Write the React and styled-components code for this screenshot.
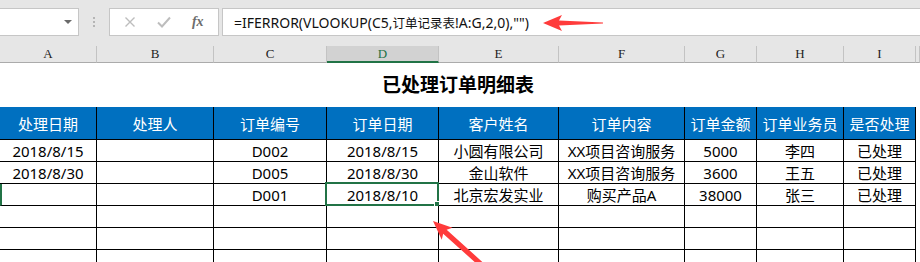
import React from 'react';
import styled, { createGlobalStyle } from 'styled-components';

const GlobalStyle = createGlobalStyle`
  html, body {
    margin: 0;
    padding: 0;
    background: #fff;
  }
  body {
    width: 920px;
    height: 262px;
    overflow: hidden;
    font-family: "Noto Sans", "Noto Sans CJK SC", sans-serif;
  }
`;

const COLS = '97px 117px 113px 112px 120px 126px 72px 87px 72px 1fr';

const Sheet = styled.div`
  position: relative;
  width: 920px;
  height: 262px;
  overflow: hidden;
`;

const Toolbar = styled.div`
  height: 46px;
  background: #e6e6e6;
  display: flex;
  align-items: flex-start;
  padding-top: 8px;
  box-sizing: border-box;
`;

const NameBox = styled.div`
  width: 79px;
  height: 28px;
  box-sizing: border-box;
  background: #fff;
  border: 1px solid #c6c6c6;
  border-left: none;
  display: flex;
  align-items: center;
  justify-content: flex-end;
  padding-right: 6px;
`;

const DropArrow = styled.span`
  width: 0;
  height: 0;
  border-left: 4px solid transparent;
  border-right: 4px solid transparent;
  border-top: 4px solid #6a6a6a;
`;

const Grip = styled.div`
  width: 30px;
  height: 28px;
  display: flex;
  flex-direction: column;
  align-items: center;
  justify-content: center;
  gap: 2px;
  span {
    width: 2px;
    height: 2px;
    background: #b5b5b5;
  }
`;

const FxBox = styled.div`
  width: 110px;
  height: 28px;
  box-sizing: border-box;
  background: #fff;
  border: 1px solid #c6c6c6;
  display: flex;
  align-items: center;
  justify-content: space-around;
  padding: 0 4px;
  margin-right: 3px;
`;

const FxLabel = styled.span`
  font-family: "Liberation Serif", serif;
  font-style: italic;
  font-size: 14px;
  color: #6d6d6d;
  font-weight: bold;
`;

const FormulaBar = styled.div`
  flex: 1;
  height: 28px;
  box-sizing: border-box;
  background: #fff;
  border: 1px solid #c6c6c6;
  border-right: none;
  display: flex;
  align-items: center;
  padding-left: 11px;
  font-size: 14px;
  color: #111;
  white-space: nowrap;
`;

const Cjk = styled.span`
  font-family: "Noto Sans CJK SC", sans-serif;
  font-size: 12.5px;
`;

const Grid = styled.div`
  display: grid;
  grid-template-columns: ${COLS};
`;

const ColHead = styled.div`
  height: 17px;
  box-sizing: border-box;
  background: ${p => (p.$active ? '#d2d2d2' : '#e6e6e6')};
  border-bottom: ${p => (p.$active ? '2px solid #217346' : '1px solid #ababab')};
  border-right: 1px solid #c3c3c3;
  color: ${p => (p.$active ? '#217346' : '#222')};
  font-family: "Liberation Serif", serif;
  font-size: 13px;
  line-height: 16px;
  text-align: center;
`;

const TitleRow = styled.div`
  height: 44px;
  display: grid;
  grid-template-columns: 916px 1fr;
`;

const Title = styled.div`
  display: flex;
  align-items: center;
  justify-content: center;
  font-family: "Noto Sans CJK SC", sans-serif;
  font-weight: bold;
  font-size: 19px;
  color: #000;
  padding-bottom: 4px;
`;

const Cell = styled.div`
  position: relative;
  height: ${p => (p.$head ? '33px' : '22px')};
  box-sizing: border-box;
  display: flex;
  align-items: center;
  justify-content: center;
  white-space: nowrap;
  font-size: 15px;
  background: ${p => (p.$head ? '#0070c0' : '#fff')};
  color: ${p => (p.$head ? '#fff' : '#000')};
  border-right: ${p => (p.$blank ? 'none' : '1px solid #000')};
  border-bottom: ${p => (p.$blank ? 'none' : '1px solid #000')};
  border-left: ${p => (p.$mark ? '2px solid #217346' : 'none')};
  font-family: "Noto Sans", "Noto Sans CJK SC", sans-serif;
`;

const Selection = styled.div`
  position: absolute;
  left: -2px;
  top: -2px;
  right: -1px;
  bottom: -1px;
  border: 2px solid #217346;
  pointer-events: none;
  &::after {
    content: '';
    position: absolute;
    right: -4px;
    bottom: -4px;
    width: 5px;
    height: 5px;
    background: #217346;
    border: 1px solid #fff;
  }
`;

const Arrow = styled.svg`
  position: absolute;
  left: ${p => p.$x}px;
  top: ${p => p.$y}px;
  overflow: visible;
`;

const letters = ['A', 'B', 'C', 'D', 'E', 'F', 'G', 'H', 'I', ''];
const heads = ['处理日期', '处理人', '订单编号', '订单日期', '客户姓名', '订单内容', '订单金额', '订单业务员', '是否处理'];
const rows = [
  ['2018/8/15', '', 'D002', '2018/8/15', '小圆有限公司', 'XX项目咨询服务', '5000', '李四', '已处理'],
  ['2018/8/30', '', 'D005', '2018/8/30', '金山软件', 'XX项目咨询服务', '3600', '王五', '已处理'],
  ['', '', 'D001', '2018/8/10', '北京宏发实业', '购买产品A', '38000', '张三', '已处理'],
  ['', '', '', '', '', '', '', '', ''],
  ['', '', '', '', '', '', '', '', ''],
  ['', '', '', '', '', '', '', '', ''],
];

const ArrowShape = ({ thick, len = 60 }) => (
  <polygon
    points={`0,0 19,-8 16,-2.6 ${len},${-thick} ${len},${thick} 16,2.6 19,8`}
    fill="#ff3b3b"
  />
);

export default function App() {
  return (
    <Sheet>
      <GlobalStyle />
      <Toolbar>
        <NameBox>
          <DropArrow />
        </NameBox>
        <Grip>
          <span />
          <span />
          <span />
        </Grip>
        <FxBox>
          <svg width="12" height="12" viewBox="0 0 12 12">
            <path d="M1.5 1.5 L10.5 10.5 M10.5 1.5 L1.5 10.5" stroke="#bdbdbd" strokeWidth="1.4" />
          </svg>
          <svg width="14" height="12" viewBox="0 0 14 12">
            <path d="M1 6.5 L5 10.5 L13 1.5" stroke="#bdbdbd" strokeWidth="2" fill="none" />
          </svg>
          <FxLabel>fx</FxLabel>
        </FxBox>
        <FormulaBar>
          =IFERROR(VLOOKUP(C5,<Cjk>订单记录表</Cjk>!A:G,2,0),"")
        </FormulaBar>
      </Toolbar>

      <Grid>
        {letters.map((l, i) => (
          <ColHead key={i} $active={l === 'D'}>
            {l}
          </ColHead>
        ))}
      </Grid>

      <TitleRow>
        <Title>已处理订单明细表</Title>
        <div />
      </TitleRow>

      <Grid>
        {heads.map(h => (
          <Cell key={h} $head>
            {h}
          </Cell>
        ))}
        <Cell $blank />
        {rows.map((r, ri) => (
          <React.Fragment key={ri}>
            {r.map((v, ci) => (
              <Cell key={ci} $mark={ri === 2 && ci === 0}>
                {v}
                {ri === 2 && ci === 3 && <Selection />}
              </Cell>
            ))}
            <Cell $blank />
          </React.Fragment>
        ))}
      </Grid>

      <Arrow $x={543} $y={23} width="62" height="2">
        <ArrowShape thick={0.6} />
      </Arrow>
      <Arrow $x={433} $y={221} width="2" height="2">
        <g transform="rotate(42)">
          <ArrowShape thick={2.6} len={64} />
        </g>
      </Arrow>
    </Sheet>
  );
}
